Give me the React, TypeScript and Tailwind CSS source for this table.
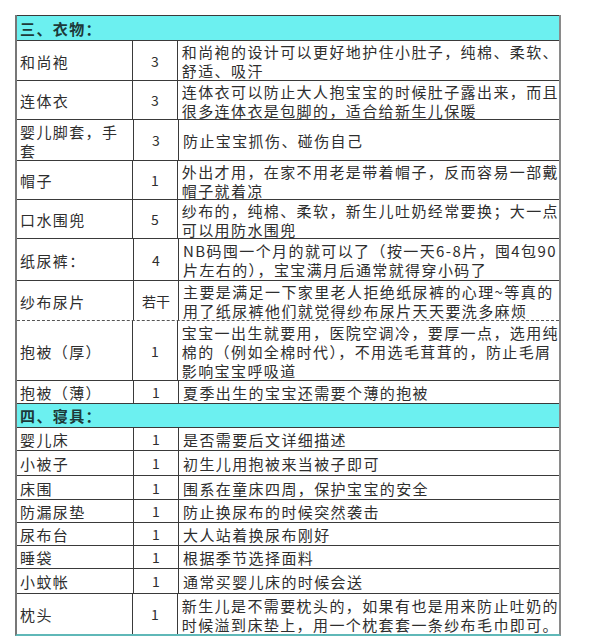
import React from 'react';

type Row =
  | { kind: 'section'; title: string; h: number }
  | { kind: 'item'; name: string[]; qty: string; desc: string[]; h: number; dashed?: boolean };

const rows: Row[] = [
  { kind: 'section', title: '三、衣物：', h: 25 },
  { kind: 'item', name: ['和尚袍'], qty: '3', desc: ['和尚袍的设计可以更好地护住小肚子，纯棉、柔软、', '舒适、吸汗'], h: 40 },
  { kind: 'item', name: ['连体衣'], qty: '3', desc: ['连体衣可以防止大人抱宝宝的时候肚子露出来，而且', '很多连体衣是包脚的，适合给新生儿保暖'], h: 39 },
  { kind: 'item', name: ['婴儿脚套，手', '套'], qty: '3', desc: ['防止宝宝抓伤、碰伤自己'], h: 41 },
  { kind: 'item', name: ['帽子'], qty: '1', desc: ['外出才用，在家不用老是带着帽子，反而容易一部戴', '帽子就着凉'], h: 39 },
  { kind: 'item', name: ['口水围兜'], qty: '5', desc: ['纱布的，纯棉、柔软，新生儿吐奶经常要换；大一点', '可以用防水围兜'], h: 39 },
  { kind: 'item', name: ['纸尿裤：'], qty: '4', desc: ['NB码囤一个月的就可以了（按一天6-8片，囤4包90', '片左右的），宝宝满月后通常就得穿小码了'], h: 42 },
  { kind: 'item', name: ['纱布尿片'], qty: '若干', desc: ['主要是满足一下家里老人拒绝纸尿裤的心理~等真的', '用了纸尿裤他们就觉得纱布尿片天天要洗多麻烦'], h: 40 },
  { kind: 'item', name: ['抱被（厚）'], qty: '1', desc: ['宝宝一出生就要用，医院空调冷，要厚一点，选用纯', '棉的（例如全棉时代），不用选毛茸茸的，防止毛屑', '影响宝宝呼吸道'], h: 60, dashed: true },
  { kind: 'item', name: ['抱被（薄）'], qty: '1', desc: ['夏季出生的宝宝还需要个薄的抱被'], h: 23 },
  { kind: 'section', title: '四、寝具：', h: 24 },
  { kind: 'item', name: ['婴儿床'], qty: '1', desc: ['是否需要后文详细描述'], h: 23 },
  { kind: 'item', name: ['小被子'], qty: '1', desc: ['初生儿用抱被来当被子即可'], h: 25 },
  { kind: 'item', name: ['床围'], qty: '1', desc: ['围系在童床四周，保护宝宝的安全'], h: 24 },
  { kind: 'item', name: ['防漏尿垫'], qty: '1', desc: ['防止换尿布的时候突然袭击'], h: 23 },
  { kind: 'item', name: ['尿布台'], qty: '1', desc: ['大人站着换尿布刚好'], h: 23 },
  { kind: 'item', name: ['睡袋'], qty: '1', desc: ['根据季节选择面料'], h: 23 },
  { kind: 'item', name: ['小蚊帐'], qty: '1', desc: ['通常买婴儿床的时候会送'], h: 25 },
  { kind: 'item', name: ['枕头'], qty: '1', desc: ['新生儿是不需要枕头的，如果有也是用来防止吐奶的', '时候溢到床垫上，用一个枕套套一条纱布毛巾即可。'], h: 41 },
];

export default function App() {
  return (
    <div
      className="w-[595px] h-[642px] bg-white pt-[15px] pl-[15px] text-[#2e2e2e]"
      style={{ fontFamily: '"Noto Sans CJK SC", "Liberation Sans", sans-serif' }}
    >
      <div className="w-[546px] border-l-2 border-r-2 border-l-[#777] border-r-[#8a8a8a] border-b-2 border-b-[#5fb8b8]">
        {rows.map((row, i) =>
          row.kind === 'section' ? (
            <div
              key={i}
              style={{ height: row.h }}
              className="flex items-center border-t border-[#3a3a3a] bg-[#6cf0f0] pl-[3px] pt-[2px] text-[15px] font-bold tracking-[1.4px] text-[#1c3a3a]"
            >
              {row.title}
            </div>
          ) : (
            <div
              key={i}
              style={{ height: row.h }}
              className={
                'flex border-t text-[15px] leading-[19px] tracking-[1.4px] ' +
                (row.dashed ? 'border-dashed border-[#555]' : 'border-[#3a3a3a]')
              }
            >
              <div className="w-[117px] flex flex-col justify-center pl-[3px] pt-[1px] border-r border-[#3a3a3a]">
                {row.name.map((n, j) => (
                  <span key={j} className="whitespace-nowrap">{n}</span>
                ))}
              </div>
              <div className="w-[45px] flex items-center justify-center pt-[1px] border-r border-[#3a3a3a] text-[14px] tracking-normal">
                {row.qty}
              </div>
              <div className="flex-1 flex flex-col justify-center pl-[4px] pt-[1px]">
                {row.desc.map((d, j) => (
                  <span key={j} className="whitespace-nowrap">{d}</span>
                ))}
              </div>
            </div>
          )
        )}
      </div>
    </div>
  );
}
